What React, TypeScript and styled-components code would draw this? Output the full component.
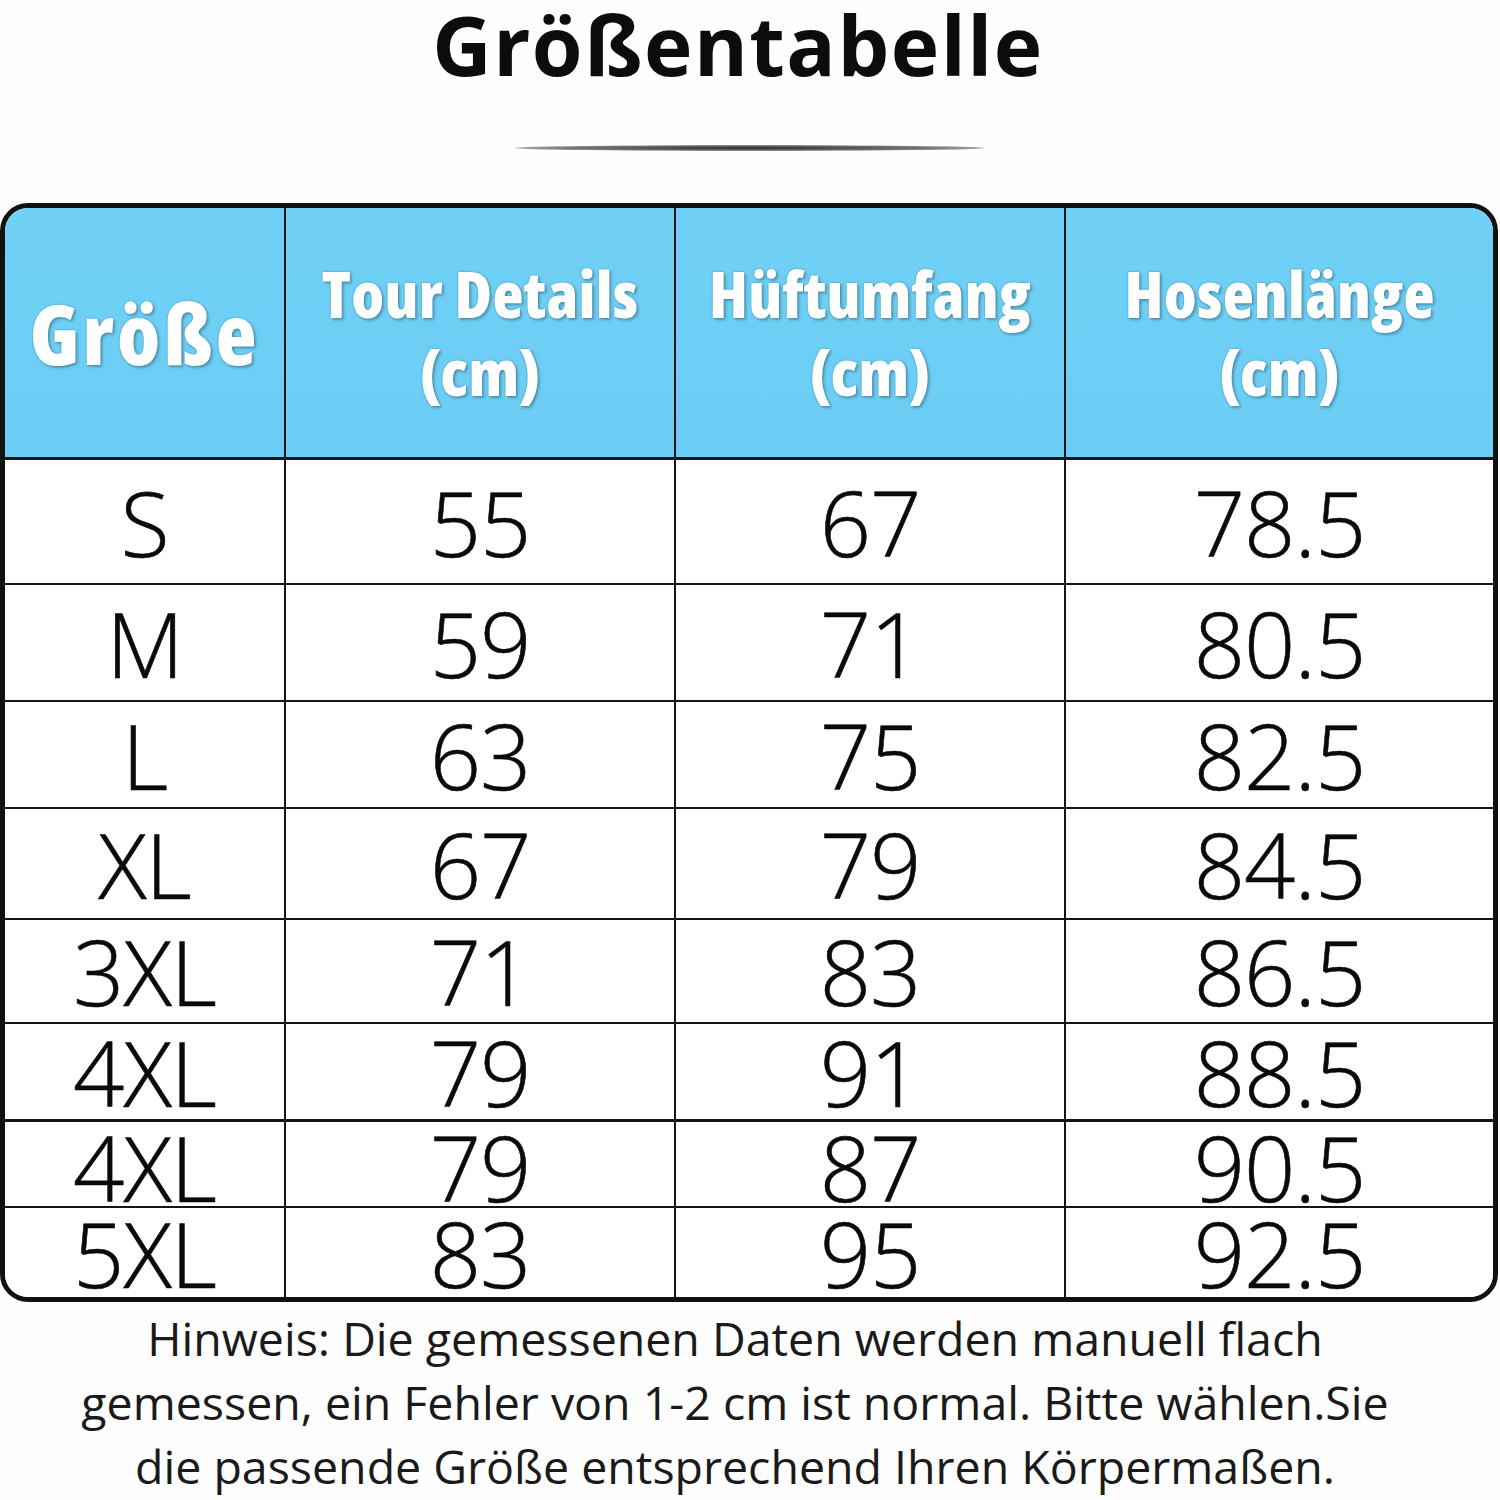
import React from "react";
import styled, { createGlobalStyle } from "styled-components";

const Global = createGlobalStyle`
  html, body { margin: 0; padding: 0; background: #fefefe; }
  body { font-family: "Open Sans", "Noto Sans", sans-serif; color: #111; }
`;

const Page = styled.div`
  width: 1500px;
  display: flex;
  flex-direction: column;
  align-items: center;
`;

const Title = styled.h1`
  margin: 0 24px 0 0;
  padding-top: 4px;
  height: 80px;
  font-family: "Open Sans", sans-serif;
  font-weight: 700;
  font-size: 82px;
  line-height: 80px;
  letter-spacing: 1.5px;
  color: #0c0c0c;
  text-align: center;
`;

const Divider = styled.div`
  margin-top: 61px;
  width: 470px;
  height: 6px;
  border-radius: 50%;
  background: radial-gradient(ellipse at center, rgba(30,30,30,0.95) 0%, rgba(60,60,60,0.7) 55%, rgba(120,120,120,0) 100%);
`;

const Table = styled.div`
  margin-top: 52px;
  width: 1498px;
  box-sizing: border-box;
  border: 5px solid #111;
  border-radius: 28px;
  overflow: hidden;
  background: #fff;
  align-self: flex-start;
`;

const Row = styled.div<{ $h: number; $line: number; $head?: boolean }>`
  display: grid;
  grid-template-columns: 281px 390px 390px 1fr;
  height: ${(p) => p.$h}px;
  box-sizing: border-box;
  border-bottom: ${(p) => p.$line}px solid #151515;
  background: ${(p) => (p.$head ? "linear-gradient(180deg, #70d0f6 0%, #6ccef5 100%)" : "#fff")};
`;

const Cell = styled.div`
  display: flex;
  align-items: center;
  justify-content: center;
  box-sizing: border-box;
  border-right: 2px solid #151515;
  &:last-child { border-right: none; }
`;

const HeadText = styled.div<{ $big?: boolean }>`
  font-family: "Open Sans", sans-serif;
  font-weight: 800;
  font-stretch: 75%;
  font-size: ${(p) => (p.$big ? 84 : 64)}px;
  line-height: 78px;
  letter-spacing: ${(p) => (p.$big ? 3 : 0.3)}px;
  color: #fff;
  text-align: center;
  text-shadow: 0 0 2px rgba(20, 90, 130, 0.6), 2px 2px 3px rgba(0, 0, 0, 0.25);
`;

const Num = styled.span`
  font-family: "Open Sans", sans-serif;
  font-weight: 300;
  font-stretch: 90%;
  font-size: 90px;
  line-height: 1;
  color: #0a0a0a;
  letter-spacing: -1px;
  -webkit-text-stroke: 0.6px #0a0a0a;
`;

const Note = styled.p`
  margin: 4px 30px 0 0;
  font-family: "Open Sans", sans-serif;
  font-weight: 520;
  font-size: 46.5px;
  line-height: 64px;
  color: #1a1a1a;
  text-align: center;
  white-space: nowrap;
`;

const rows: { h: number; line: number; v: string[] }[] = [
  { h: 125, line: 2, v: ["S", "55", "67", "78.5"] },
  { h: 117, line: 2, v: ["M", "59", "71", "80.5"] },
  { h: 107, line: 2, v: ["L", "63", "75", "82.5"] },
  { h: 111, line: 2, v: ["XL", "67", "79", "84.5"] },
  { h: 104, line: 2, v: ["3XL", "71", "83", "86.5"] },
  { h: 98, line: 3, v: ["4XL", "79", "91", "88.5"] },
  { h: 86, line: 2, v: ["4XL", "79", "87", "90.5"] },
  { h: 89, line: 0, v: ["5XL", "83", "95", "92.5"] },
];

export default function App() {
  return (
    <Page>
      <Global />
      <Title>Größentabelle</Title>
      <Divider />
      <Table>
        <Row $h={252} $line={3} $head>
          <Cell>
            <HeadText $big>Größe</HeadText>
          </Cell>
          <Cell>
            <HeadText>
              Tour Details
              <br />
              (cm)
            </HeadText>
          </Cell>
          <Cell>
            <HeadText>
              Hüftumfang
              <br />
              (cm)
            </HeadText>
          </Cell>
          <Cell>
            <HeadText>
              Hosenlänge
              <br />
              (cm)
            </HeadText>
          </Cell>
        </Row>
        {rows.map((r, i) => (
          <Row key={i} $h={r.h} $line={r.line}>
            {r.v.map((t, j) => (
              <Cell key={j}>
                <Num>{t}</Num>
              </Cell>
            ))}
          </Row>
        ))}
      </Table>
      <Note>
        Hinweis: Die gemessenen Daten werden manuell flach
        <br />
        gemessen, ein Fehler von 1-2 cm ist normal. Bitte wählen.Sie
        <br />
        die passende Größe entsprechend Ihren Körpermaßen.
      </Note>
    </Page>
  );
}
